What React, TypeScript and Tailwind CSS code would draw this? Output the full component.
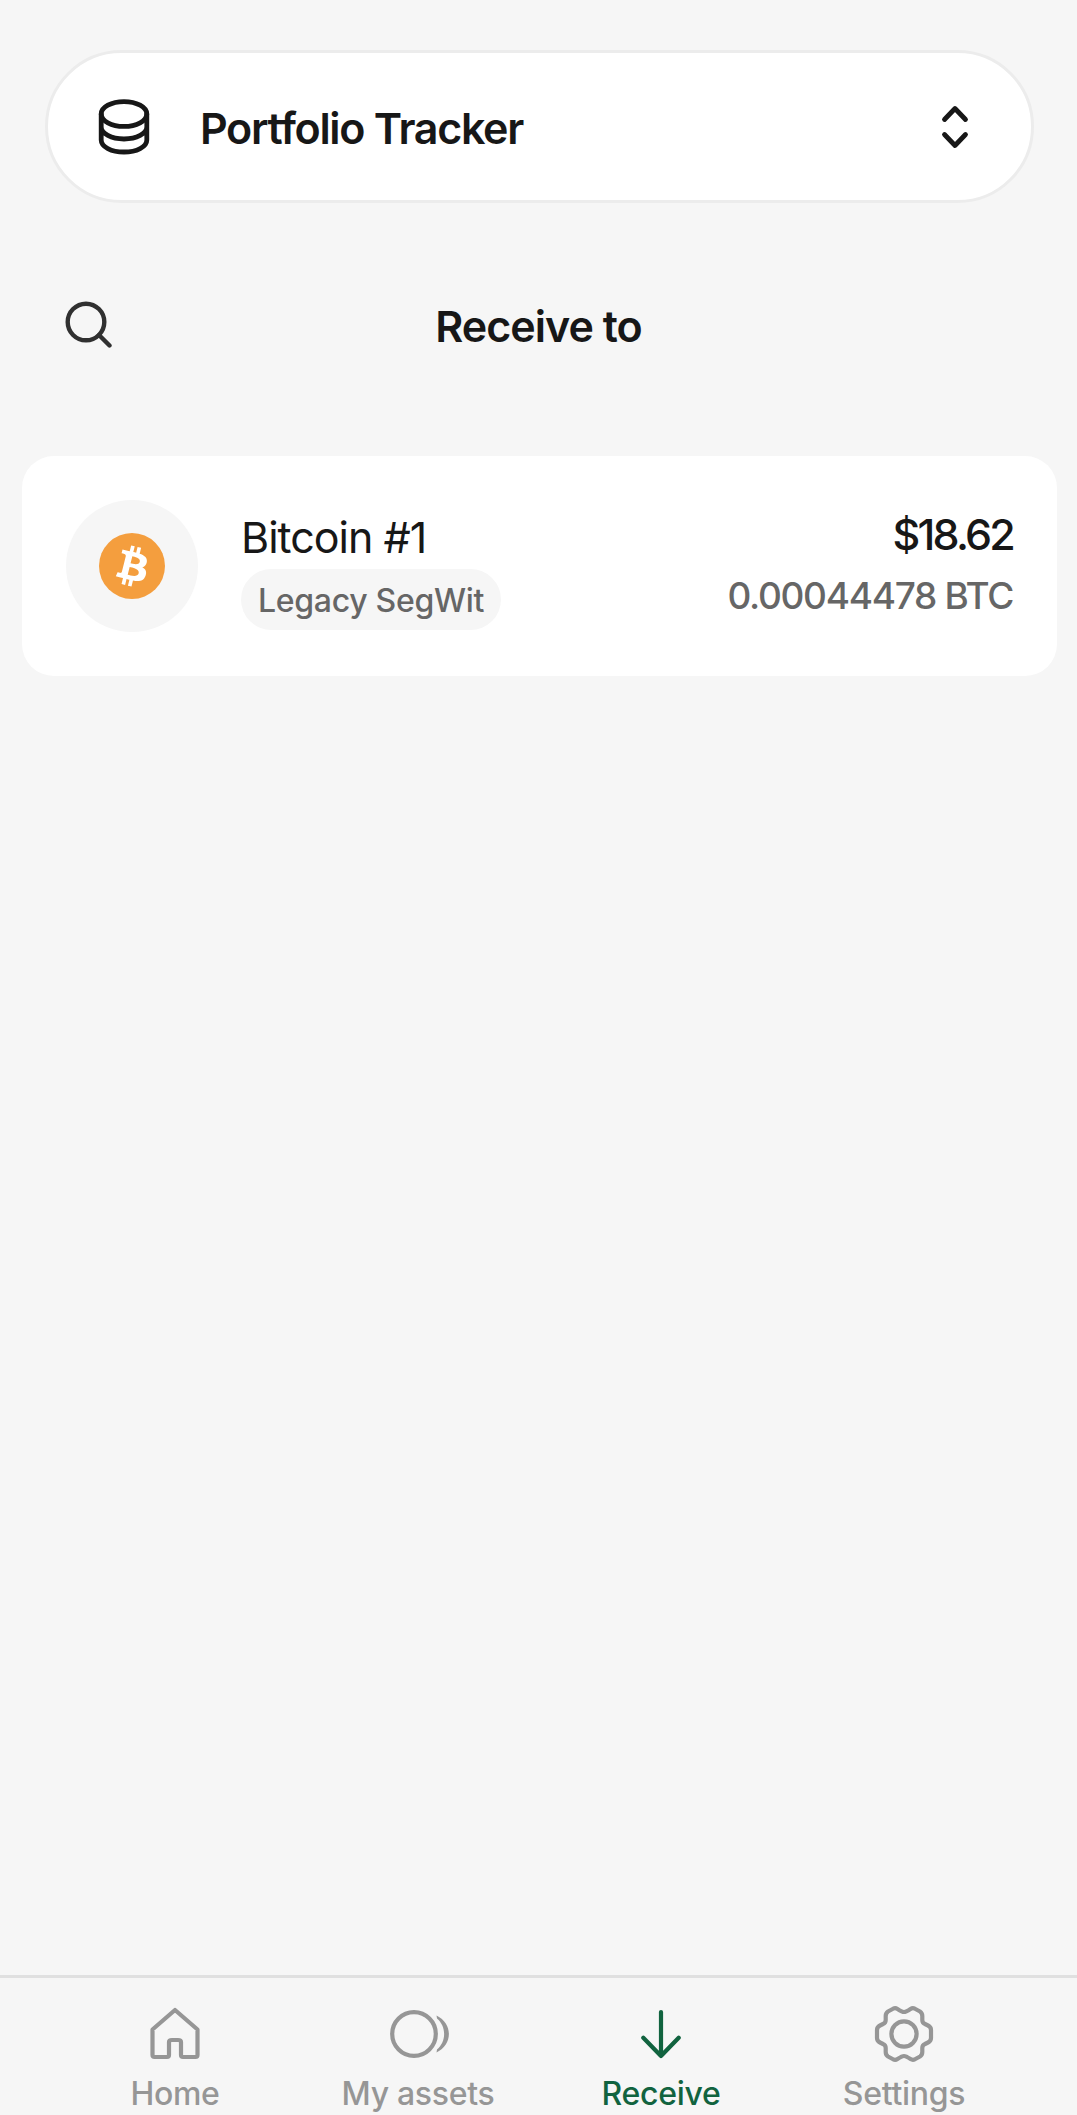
import type { ReactNode } from "react";

function Database() {
  return (
    <svg className="h-[56px] w-[52px]" viewBox="0 0 52 56" fill="none" stroke="#171717" strokeWidth="4.8" strokeLinecap="round">
      <ellipse cx="26" cy="15" rx="22.800" ry="12.400" />
      <path d="M3.200 15V41C3.200 47.800 13.300 53 26 53S48.800 47.800 48.800 41V15M3.200 28C3.200 34.500 13.300 40 26 40S48.800 34.500 48.800 28" />
    </svg>
  );
}

function Tab({ label, active, children }: { label: string; active?: boolean; children: ReactNode }) {
  return (
    <div className={`flex w-[243px] flex-col items-center ${active ? "text-[#11633f]" : "text-[#969696]"}`}>
      <svg className="h-[60px] w-[60px] overflow-visible" viewBox="0 0 60 60" fill="none" stroke="currentColor" strokeWidth="4.2" strokeLinecap="round" strokeLinejoin="round">
        {children}
      </svg>
      <span className="mt-[10px] text-[32px] leading-[40px] font-medium tracking-[-0.3px]">{label}</span>
    </div>
  );
}

export default function App() {
  return (
    <div className="flex h-[2115px] w-[1077px] flex-col bg-[#f6f6f6] font-['Inter',sans-serif] whitespace-nowrap text-[#171717]">
      <header className="mr-[43px] ml-[45px] mt-[50px] flex h-[153px] items-center rounded-full border-[3px] border-[#ececec] bg-white pr-[56px] pl-[50px]">
        <Database />
        <h1 className="ml-[50px] flex-1 pt-[3px] text-[43px] font-semibold tracking-[-1.3px]">Portfolio Tracker</h1>
        <svg className="h-[44px] w-[40px]" viewBox="0 0 40 44" fill="none" stroke="#171717" strokeWidth="4.8" strokeLinecap="round" strokeLinejoin="round">
          <path d="M9.500 14.500L20 3.500L30.500 14.500M9.500 29.500L20 40.500L30.500 29.500" />
        </svg>
      </header>

      <section className="mt-[71px] grid h-[100px] grid-cols-[1fr_auto_1fr] items-center pr-[64px] pl-[64px]">
        <svg className="h-[48px] w-[48px]" viewBox="0 0 48 48" fill="none" stroke="#303030" strokeWidth="4.4" strokeLinecap="round">
          <circle cx="22" cy="22" r="18.300" />
          <path d="M35 35L45.500 45.500" />
        </svg>
        <h2 className="pt-[4px] text-[43px] font-semibold tracking-[-1px]">Receive to</h2>
      </section>

      <main className="flex-1 pt-[82px] pr-[20px] pl-[22px]">
        <article className="flex h-[220px] items-center rounded-[32px] bg-white px-[44px]">
          <div className="flex size-[132px] items-center justify-center rounded-full bg-[#f6f6f6]">
            <svg className="size-[66px]" viewBox="0 0 32 32">
              <circle cx="16" cy="16" r="16" fill="#f49e3e" />
              <path fill="#fff" d="M23.189 14.02c.314-2.096-1.283-3.223-3.465-3.975l.708-2.84-1.728-.43-.69 2.765c-.454-.114-.92-.22-1.385-.326l.695-2.783L15.596 6l-.708 2.839c-.376-.086-.746-.17-1.104-.26l.002-.009-2.384-.595-.46 1.846s1.283.294 1.256.312c.7.175.826.638.805 1.006l-.806 3.235c.048.012.11.03.18.057l-.183-.045-1.13 4.532c-.086.212-.303.531-.793.41.018.025-1.256-.313-1.256-.313l-.858 1.978 2.25.561c.418.105.828.215 1.231.318l-.715 2.872 1.727.43.708-2.84c.472.127.93.245 1.378.357l-.706 2.828 1.728.43.715-2.866c2.948.558 5.164.333 6.097-2.333.752-2.146-.037-3.385-1.588-4.192 1.13-.26 1.98-1.003 2.207-2.538zm-3.95 5.538c-.533 2.147-4.148.986-5.32.695l.95-3.805c1.172.293 4.929.872 4.37 3.11zm.535-5.569c-.487 1.953-3.495.96-4.47.717l.86-3.45c.975.243 4.118.696 3.61 2.733z" />
            </svg>
          </div>
          <div className="ml-[43px] flex flex-1 flex-col items-start pt-[7px]">
            <h3 className="text-[43px] leading-[56px] tracking-[-1px]">Bitcoin #1</h3>
            <span className="mt-[4px] flex h-[61px] items-center rounded-full bg-[#f6f6f6] px-[17px] text-[32px] font-medium tracking-[-0.3px] text-[#666]">
              <span className="pt-[2px]">Legacy SegWit</span>
            </span>
          </div>
          <div className="flex flex-col items-end">
            <span className="-mt-[7px] text-[43px] leading-[56px] font-medium tracking-[-2.8px]">$18.62</span>
            <span className="mt-[10px] text-[37px] leading-[48px] font-medium tracking-[-1.3px] text-[#666]">0.00044478 BTC</span>
          </div>
        </article>
      </main>

      <nav className="flex h-[140px] justify-center overflow-hidden border-t-[3px] border-[#e0e0e0] pt-[26px] pl-[2px]">
        <Tab label="Home">
          <path d="M30 6L52.500 25.500V51Q52.500 53 50.500 53H38Q36 53 36 51V38Q36 36 33 36H27Q24 36 24 38V51Q24 53 22 53H9.500Q7.500 53 7.500 51V25.500Z" />
        </Tab>
        <Tab label="My assets">
          <circle cx="26" cy="30" r="21.800" />
          <path d="M48.500 11.500C65 19.500 65 40.500 48.500 48.500L49 45.500C58.500 37.500 58.500 22.500 49 14.500Z" fill="currentColor" stroke="none" />
        </Tab>
        <Tab label="Receive" active>
          <path d="M30 8V52M12.300 33.800L30 52L47.700 33.800" />
        </Tab>
        <Tab label="Settings">
          <circle cx="30" cy="30" r="12.600" />
          <path d="M30 8Q32 8 36.500 5Q38.500 3.700 40.500 4.500L46 7.500Q48.300 9 48.300 12V16Q48.300 19 51 20L54 21.500Q57 23 57 26V34Q57 37 54 38.500L51 40Q48.300 41 48.300 44V48Q48.300 51 46 52.500L40.500 55.500Q38.500 56.300 36.500 55Q32 52 30 52Q28 52 23.500 55Q21.500 56.300 19.500 55.500L14 52.500Q11.700 51 11.700 48V44Q11.700 41 9 40L6 38.500Q3 37 3 34V26Q3 23 6 21.500L9 20Q11.700 19 11.700 16V12Q11.700 9 14 7.500L19.500 4.500Q21.500 3.700 23.500 5Q28 8 30 8Z" />
        </Tab>
      </nav>
    </div>
  );
}
